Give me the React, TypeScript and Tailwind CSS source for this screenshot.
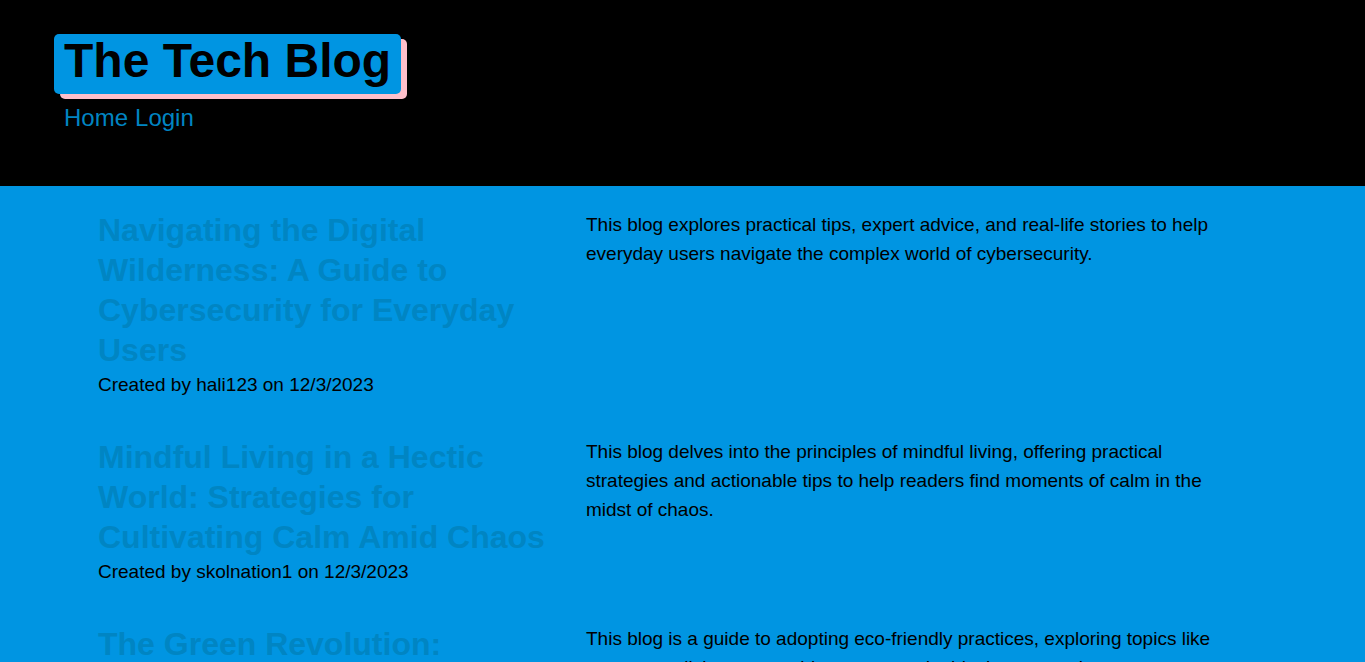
const posts = [
  {
    title: "Navigating the Digital Wilderness: A Guide to Cybersecurity for Everyday Users",
    author: "hali123",
    date: "12/3/2023",
    summary:
      "This blog explores practical tips, expert advice, and real-life stories to help everyday users navigate the complex world of cybersecurity.",
  },
  {
    title: "Mindful Living in a Hectic World: Strategies for Cultivating Calm Amid Chaos",
    author: "skolnation1",
    date: "12/3/2023",
    summary:
      "This blog delves into the principles of mindful living, offering practical strategies and actionable tips to help readers find moments of calm in the midst of chaos.",
  },
  {
    title: "The Green Revolution:",
    author: "",
    date: "",
    summary:
      "This blog is a guide to adopting eco-friendly practices, exploring topics like zero-waste living, renewable energy, and ethical consumerism.",
  },
];

export default function App() {
  return (
    <div className="h-screen overflow-hidden bg-[#0095e2] font-['Liberation_Sans',Arial,sans-serif] text-[19px] leading-[29px] text-black">
      <header className="bg-black px-[54px] pt-[34px] pb-[50px]">
        <h1 className="w-fit rounded-[5px] bg-[#0095e2] px-[10px] pb-1.5 text-5xl leading-[54px] font-bold shadow-[6px_5px_0_pink]">
          <a href="#">The Tech Blog</a>
        </h1>
        <nav className="flex gap-[7px] px-[10px] pt-1.5 text-2xl leading-9 text-[#0085c3]">
          <a href="#">Home</a>
          <a href="#login">Login</a>
        </nav>
      </header>
      <main className="flex flex-col gap-[38px] px-[98px] py-6">
        {posts.map((post) => (
          <article key={post.title} className="flex">
            <div className="w-[488px] shrink-0 pr-8">
              <h2 className="text-[32px] leading-10 font-bold text-[#0085c3]">
                <a href="#">{post.title}</a>
              </h2>
              {post.author && (
                <p>
                  Created by {post.author} on {post.date}
                </p>
              )}
            </div>
            <p className="max-w-[650px]">{post.summary}</p>
          </article>
        ))}
      </main>
    </div>
  );
}
